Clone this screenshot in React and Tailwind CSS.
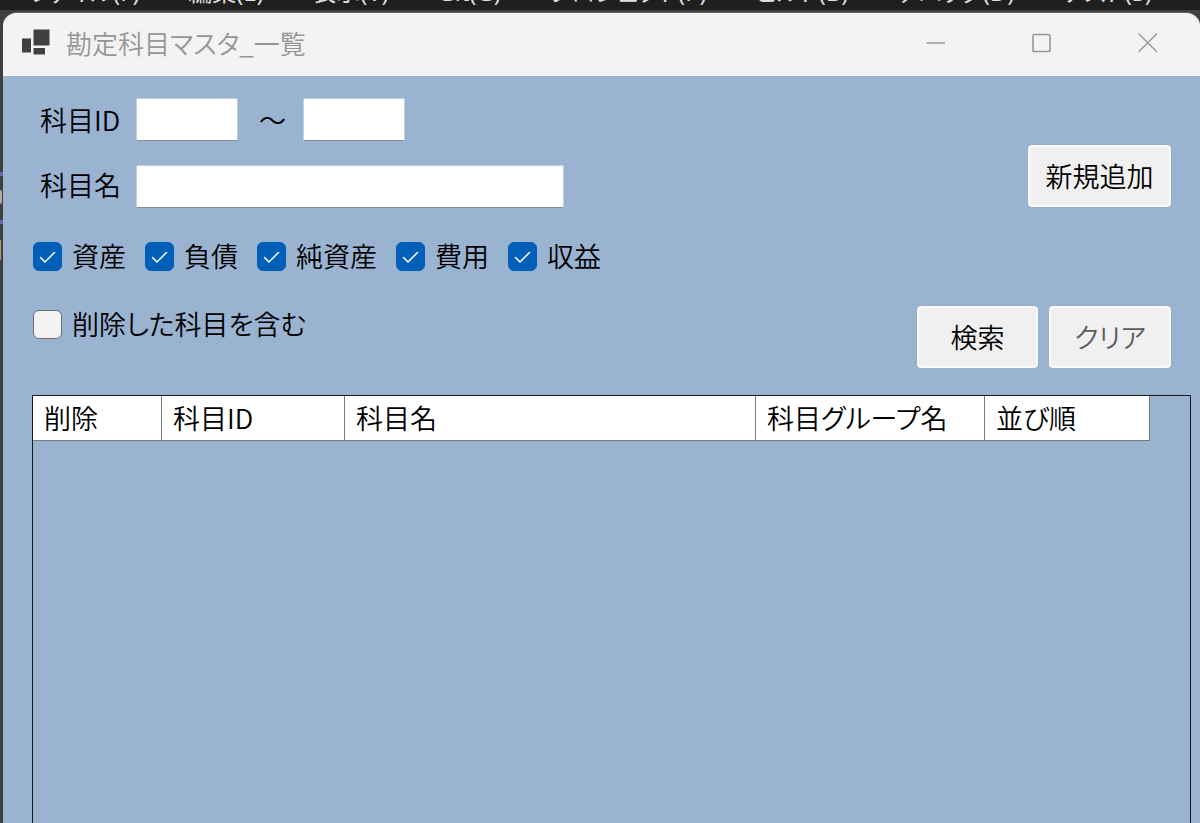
const menuItems = [
  "ファイル(F)",
  "編集(E)",
  "表示(V)",
  "Git(G)",
  "プロジェクト(P)",
  "ビルド(B)",
  "デバッグ(D)",
  "テスト(S)",
];

const groups = ["資産", "負債", "純資産", "費用", "収益"];

const columns = [
  { name: "削除", width: "w-[129px]" },
  { name: "科目ID", width: "w-[183px]" },
  { name: "科目名", width: "w-[411px]" },
  { name: "科目グループ名", width: "w-[229px]" },
  { name: "並び順", width: "w-[165px]" },
];

const inputClass =
  "h-[43px] bg-white border border-[#c3d0e0] border-b-[#868b91] rounded-[2px] px-2 outline-none";

const buttonClass =
  "h-[62px] rounded-[4px] border-2 border-[#fbfbfb] bg-[#f0f0f0] shadow-[0_0_1px_#8a8a8a] text-center";

function CheckItem({ label, defaultChecked }) {
  return (
    <label className="flex items-center gap-[10px] h-[30px] leading-[30px] whitespace-nowrap">
      <span className="relative w-[29px] h-[29px] shrink-0">
        <input
          type="checkbox"
          defaultChecked={defaultChecked}
          className="peer block appearance-none w-[29px] h-[29px] rounded-[6px] border-[1px] border-[#6e6e6e] bg-[#f3f3f3] checked:bg-[#005fb8] checked:border-[#005fb8]"
        />
        <svg
          viewBox="0 0 29 29"
          fill="none"
          stroke="white"
          strokeWidth="1.5"
          strokeLinecap="round"
          strokeLinejoin="round"
          className="absolute inset-0 hidden peer-checked:block pointer-events-none"
        >
          <path d="M7.5 15.5 L12 20 L21.5 10.5" />
        </svg>
      </span>
      {label}
    </label>
  );
}

function TitleBar() {
  return (
    <header className="flex items-center h-[63px] bg-[#f3f3f3] pl-[18px] pr-[42px] pb-1 text-[#969696]">
      <svg width="30" height="28" viewBox="0 0 30 28" fill="#404040" className="shrink-0">
        <rect x="1" y="9.500" width="9" height="14" />
        <rect x="12.500" y="0.500" width="16" height="16" />
        <rect x="12.500" y="19" width="11.500" height="6.500" />
      </svg>
      <h1 className="flex-1 ml-[15px] text-[26px] leading-8">勘定科目マスタ_一覧</h1>
      <div className="flex items-center gap-[86px]">
        <button type="button" aria-label="最小化">
          <svg width="20" height="20" viewBox="0 0 20 20" stroke="currentColor" strokeWidth="1.6">
            <path d="M0.500 10H19" />
          </svg>
        </button>
        <button type="button" aria-label="最大化">
          <svg width="20" height="20" viewBox="0 0 20 20" fill="none" stroke="currentColor" strokeWidth="1.6">
            <rect x="1" y="1.500" width="17" height="17" rx="1.800" />
          </svg>
        </button>
        <button type="button" aria-label="閉じる">
          <svg width="20" height="20" viewBox="0 0 20 20" stroke="currentColor" strokeWidth="1.4" strokeLinecap="round">
            <path d="M1 1L18.500 18.500M18.500 1L1 18.500" />
          </svg>
        </button>
      </div>
    </header>
  );
}

function SearchForm() {
  return (
    <form className="flex justify-between pt-[22px] pl-[30px] pr-[29px]" onSubmit={(e) => e.preventDefault()}>
      <div>
        <div className="flex items-center leading-10">
          <label htmlFor="idFrom" className="w-[103px] pl-[7px]">科目ID</label>
          <input id="idFrom" type="text" className={`${inputClass} w-[102px]`} />
          <label htmlFor="idTo" className="w-[65px] pl-1 text-center">～</label>
          <input id="idTo" type="text" className={`${inputClass} w-[102px]`} />
        </div>
        <div className="flex items-start mt-6 leading-10">
          <label htmlFor="accountName" className="w-[103px] pl-[7px]">科目名</label>
          <input id="accountName" type="text" className={`${inputClass} w-[428px]`} />
        </div>
        <div className="flex gap-[19px] mt-[33px]">
          {groups.map((group) => (
            <CheckItem key={group} label={group} defaultChecked />
          ))}
        </div>
        <div className="flex mt-[38px]">
          <CheckItem label="削除した科目を含む" />
        </div>
      </div>
      <div className="flex flex-col items-end gap-[99px] pt-[47px]">
        <button type="button" className={`${buttonClass} w-[143px]`}>新規追加</button>
        <div className="flex gap-[11px]">
          <button type="submit" className={`${buttonClass} w-[121px]`}>検索</button>
          <button type="reset" className={`${buttonClass} w-[122px] text-[#5c5c5c]`}>クリア</button>
        </div>
      </div>
    </form>
  );
}

export default function App() {
  return (
    <div className="flex flex-col min-h-screen overflow-hidden bg-[#3f3f40] text-[27px] leading-8 font-[350] text-black [font-family:'Noto_Sans_CJK_JP',sans-serif] [font-feature-settings:'palt']">
      <nav className="flex items-end justify-between h-[10px] overflow-hidden bg-[#1f1f1f] pl-[30px] pr-[48px] text-[24px] leading-9 font-normal text-[#e0e0e0] whitespace-nowrap [font-family:'Open_Sans','Noto_Sans_CJK_JP',sans-serif]">
        {menuItems.map((item) => (
          <span key={item}>{item}</span>
        ))}
      </nav>
      <div className="relative flex flex-col flex-1 pl-[3px] pt-[2px]">
        {/* editor lines showing past the window's left edge */}
        <div className="absolute left-0 top-[162px] w-[3px] h-1 bg-[#7160b0]" />
        <div className="absolute left-0 top-[180px] w-[2px] h-[14px] rounded-r bg-[#b9aa9a]" />
        <div className="absolute left-0 top-[210px] w-[3px] h-1 bg-[#7160b0]" />
        <div className="absolute left-0 top-[230px] w-[1px] h-5 bg-[#b59a72]" />
        <main className="flex flex-col flex-1 overflow-hidden rounded-t-[14px] border-t border-[#666666] bg-[#99b3d1]">
          <TitleBar />
          <SearchForm />
          <div className="flex-1 mt-[27px] ml-[29px] mr-[9px] border border-b-0 border-[#1a1a1a]">
            <table className="table-fixed border-separate border-spacing-0 w-[1117px] bg-white">
              <thead>
                <tr>
                  {columns.map((col) => (
                    <th
                      key={col.name}
                      className={`${col.width} h-[45px] pl-[11px] text-left font-[350] border-r border-b border-[#7a7a7a]`}
                    >
                      {col.name}
                    </th>
                  ))}
                </tr>
              </thead>
            </table>
          </div>
        </main>
      </div>
    </div>
  );
}
